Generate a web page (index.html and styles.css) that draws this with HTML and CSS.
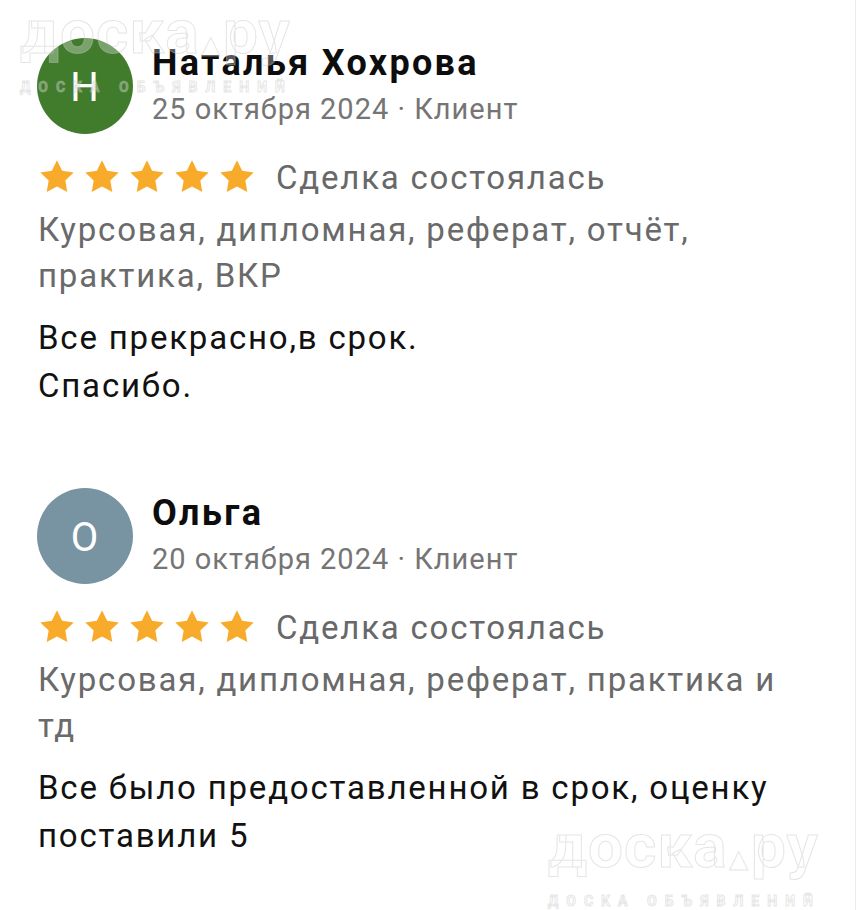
FILE: index.html
```html
<!DOCTYPE html>
<html lang="ru">
<head>
<meta charset="utf-8">
<title>Отзывы</title>
<link rel="stylesheet" href="styles.css">
</head>
<body>
<div class="page">
  <div class="watermark wm-top"><span class="wm-big">доска<span class="wm-tri">▲</span>ру</span><span class="wm-small">ДОСКА ОБЪЯВЛЕНИЙ</span></div>
  <div class="watermark wm-bottom"><span class="wm-big">доска<span class="wm-tri">▲</span>ру</span><span class="wm-small">ДОСКА ОБЪЯВЛЕНИЙ</span></div>

  <section class="review">
    <div class="head">
      <div class="avatar avatar-green">Н</div>
      <div class="who">
        <div class="name">Наталья Хохрова</div>
        <div class="meta">25 октября 2024 · Клиент</div>
      </div>
    </div>
    <div class="rating">
      <div class="stars">
        <svg viewBox="0 0 24 24"><polygon points="12,2 15.09,8.26 22,9.27 17,14.14 18.18,21.02 12,17.77 5.82,21.02 7,14.14 2,9.27 8.91,8.26"/></svg>
        <svg viewBox="0 0 24 24"><polygon points="12,2 15.09,8.26 22,9.27 17,14.14 18.18,21.02 12,17.77 5.82,21.02 7,14.14 2,9.27 8.91,8.26"/></svg>
        <svg viewBox="0 0 24 24"><polygon points="12,2 15.09,8.26 22,9.27 17,14.14 18.18,21.02 12,17.77 5.82,21.02 7,14.14 2,9.27 8.91,8.26"/></svg>
        <svg viewBox="0 0 24 24"><polygon points="12,2 15.09,8.26 22,9.27 17,14.14 18.18,21.02 12,17.77 5.82,21.02 7,14.14 2,9.27 8.91,8.26"/></svg>
        <svg viewBox="0 0 24 24"><polygon points="12,2 15.09,8.26 22,9.27 17,14.14 18.18,21.02 12,17.77 5.82,21.02 7,14.14 2,9.27 8.91,8.26"/></svg>
      </div>
      <span class="deal">Сделка состоялась</span>
    </div>
    <p class="category">Курсовая, дипломная, реферат, отчёт,<br>практика, ВКР</p>
    <p class="text">Все прекрасно,в срок.<br>Спасибо.</p>
  </section>

  <section class="review review-second">
    <div class="head">
      <div class="avatar avatar-slate">О</div>
      <div class="who">
        <div class="name">Ольга</div>
        <div class="meta">20 октября 2024 · Клиент</div>
      </div>
    </div>
    <div class="rating">
      <div class="stars">
        <svg viewBox="0 0 24 24"><polygon points="12,2 15.09,8.26 22,9.27 17,14.14 18.18,21.02 12,17.77 5.82,21.02 7,14.14 2,9.27 8.91,8.26"/></svg>
        <svg viewBox="0 0 24 24"><polygon points="12,2 15.09,8.26 22,9.27 17,14.14 18.18,21.02 12,17.77 5.82,21.02 7,14.14 2,9.27 8.91,8.26"/></svg>
        <svg viewBox="0 0 24 24"><polygon points="12,2 15.09,8.26 22,9.27 17,14.14 18.18,21.02 12,17.77 5.82,21.02 7,14.14 2,9.27 8.91,8.26"/></svg>
        <svg viewBox="0 0 24 24"><polygon points="12,2 15.09,8.26 22,9.27 17,14.14 18.18,21.02 12,17.77 5.82,21.02 7,14.14 2,9.27 8.91,8.26"/></svg>
        <svg viewBox="0 0 24 24"><polygon points="12,2 15.09,8.26 22,9.27 17,14.14 18.18,21.02 12,17.77 5.82,21.02 7,14.14 2,9.27 8.91,8.26"/></svg>
      </div>
      <span class="deal">Сделка состоялась</span>
    </div>
    <p class="category">Курсовая, дипломная, реферат, практика и<br>тд</p>
    <p class="text">Все было предоставленной в срок, оценку<br>поставили 5</p>
  </section>
</div>
</body>
</html>
```

FILE: styles.css
```css
html, body {
  margin: 0;
  padding: 0;
  background: #ffffff;
}

.page {
  position: relative;
  width: 856px;
  height: 910px;
  box-sizing: border-box;
  padding: 38px 0 0 37px;
  border-right: 1px solid #ececec;
  overflow: hidden;
  font-family: Roboto, "Noto Sans", sans-serif;
  color: #111111;
}

.review {
  position: relative;
  z-index: 1;
}

.review-second {
  margin-top: 78px;
}

.head {
  display: flex;
  align-items: center;
  gap: 19px;
}

.avatar {
  width: 96px;
  height: 96px;
  border-radius: 50%;
  flex: none;
  display: flex;
  align-items: center;
  justify-content: center;
  padding-top: 3px;
  box-sizing: border-box;
  color: #ffffff;
  font-size: 40px;
  font-weight: 400;
  letter-spacing: 1px;
}

.avatar-green {
  background: #417c2c;
}

.avatar-slate {
  background: #7893a1;
}

.who {
  display: flex;
  flex-direction: column;
}

.name {
  font-size: 36px;
  font-weight: 700;
  line-height: 40px;
  letter-spacing: 2.3px;
  color: #0d0d0d;
}

.meta {
  font-size: 29px;
  line-height: 40px;
  margin-top: 6px;
  letter-spacing: 1px;
  color: #757575;
}

.rating {
  display: flex;
  align-items: center;
  height: 44px;
  margin-top: 21px;
}

.stars {
  display: flex;
  gap: 5px;
}

.stars svg {
  width: 40px;
  height: 40px;
  fill: #f8ab2a;
  display: block;
}

.deal {
  margin-left: 19px;
  font-size: 33px;
  letter-spacing: 1.8px;
  color: #686868;
}

.category {
  margin: 8px 0 0 1px;
  font-size: 33px;
  line-height: 46px;
  letter-spacing: 1.8px;
  color: #6a6a6a;
}

.text {
  margin: 15px 0 0 1px;
  font-size: 33px;
  line-height: 48px;
  letter-spacing: 1.8px;
  color: #111111;
}

.watermark {
  position: absolute;
  z-index: 2;
  display: flex;
  flex-direction: column;
  align-items: flex-start;
  pointer-events: none;
  font-family: Roboto, "DejaVu Sans", sans-serif;
  font-weight: 700;
  color: rgba(255, 255, 255, 0.3);
  -webkit-text-stroke: 1px rgba(190, 190, 190, 0.4);
}

.wm-top {
  left: 20px;
  top: 10px;
}

.wm-bottom {
  left: 548px;
  top: 824px;
}

.wm-big {
  font-size: 62px;
  line-height: 44px;
  letter-spacing: 1px;
}

.wm-tri {
  font-family: "DejaVu Sans", sans-serif;
  font-size: 24px;
  margin: 0 2px;
}

.wm-small {
  margin-top: 12px;
  font-size: 14px;
  line-height: 16px;
  letter-spacing: 8px;
}
```
